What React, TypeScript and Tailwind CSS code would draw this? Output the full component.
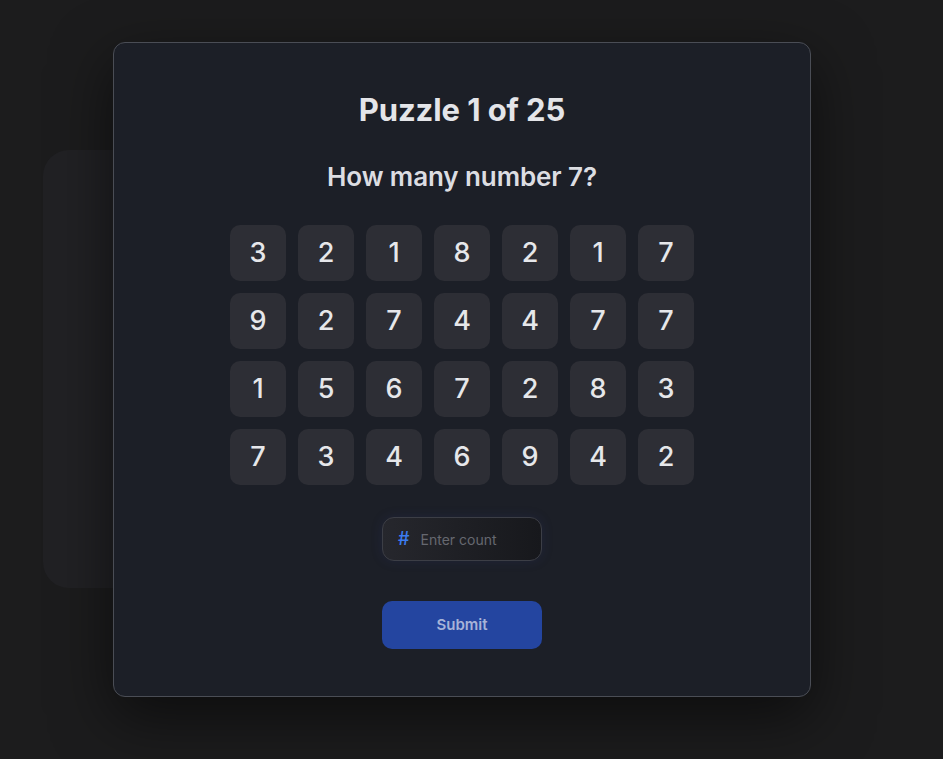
import React, { useState } from 'react';

const GRID: number[][] = [
  [3, 2, 1, 8, 2, 1, 7],
  [9, 2, 7, 4, 4, 7, 7],
  [1, 5, 6, 7, 2, 8, 3],
  [7, 3, 4, 6, 9, 4, 2],
];

export default function App() {
  const [count, setCount] = useState('');

  return (
    <div
      className="relative w-full min-h-screen bg-[#1c1c1d] overflow-hidden"
      style={{ fontFamily: 'Inter, "Noto Sans", sans-serif' }}
    >
      {/* faded page card behind the dialog */}
      <div className="pt-[150px] pl-[43px]">
        <div className="w-[740px] h-[438px] rounded-[26px] bg-[#212124]" />
      </div>

      <div className="absolute left-[113px] top-[42px] w-[698px] h-[655px] rounded-[12px] border border-[#4a4d55] bg-[#1c1f27] shadow-[0_20px_60px_rgba(0,0,0,0.55)] flex flex-col items-center pt-[48px]">
        <h1 className="text-[31px] leading-[38px] font-bold text-[#e4e5e9] tracking-[-0.1px]">
          Puzzle 1 of 25
        </h1>
        <h2 className="mt-[31px] text-[26px] leading-[34px] font-semibold text-[#dcdde2] tracking-[-0.1px]">
          How many number 7?
        </h2>

        <div className="mt-[31px] grid grid-cols-7 gap-[12px]">
          {GRID.flat().map((n, i) => (
            <div
              key={i}
              className="w-[56px] h-[56px] rounded-[10px] bg-[#2d2e35] flex items-center justify-center text-[27px] font-medium text-[#e6e7ea]"
            >
              {n}
            </div>
          ))}
        </div>

        <div className="mt-[32px] w-[160px] h-[44px] rounded-[12px] border border-[#3c3e46] bg-gradient-to-r from-[#26272d] to-[#17181c] shadow-[0_0_12px_rgba(50,60,140,0.18)] flex items-center pl-[15px] pr-[12px] gap-[11px]">
          <span className="text-[18px] leading-none text-[#3b7cf0] font-medium">#</span>
          <input
            value={count}
            onChange={e => setCount(e.target.value)}
            placeholder="Enter count"
            className="w-full bg-transparent outline-none text-[14px] text-[#d8d9de] placeholder:text-[#666870]"
          />
        </div>

        <button className="mt-[40px] w-[160px] h-[48px] rounded-[10px] bg-[#2445a0] text-[15px] font-semibold text-[#a7b3d8]">
          Submit
        </button>
      </div>
    </div>
  );
}
